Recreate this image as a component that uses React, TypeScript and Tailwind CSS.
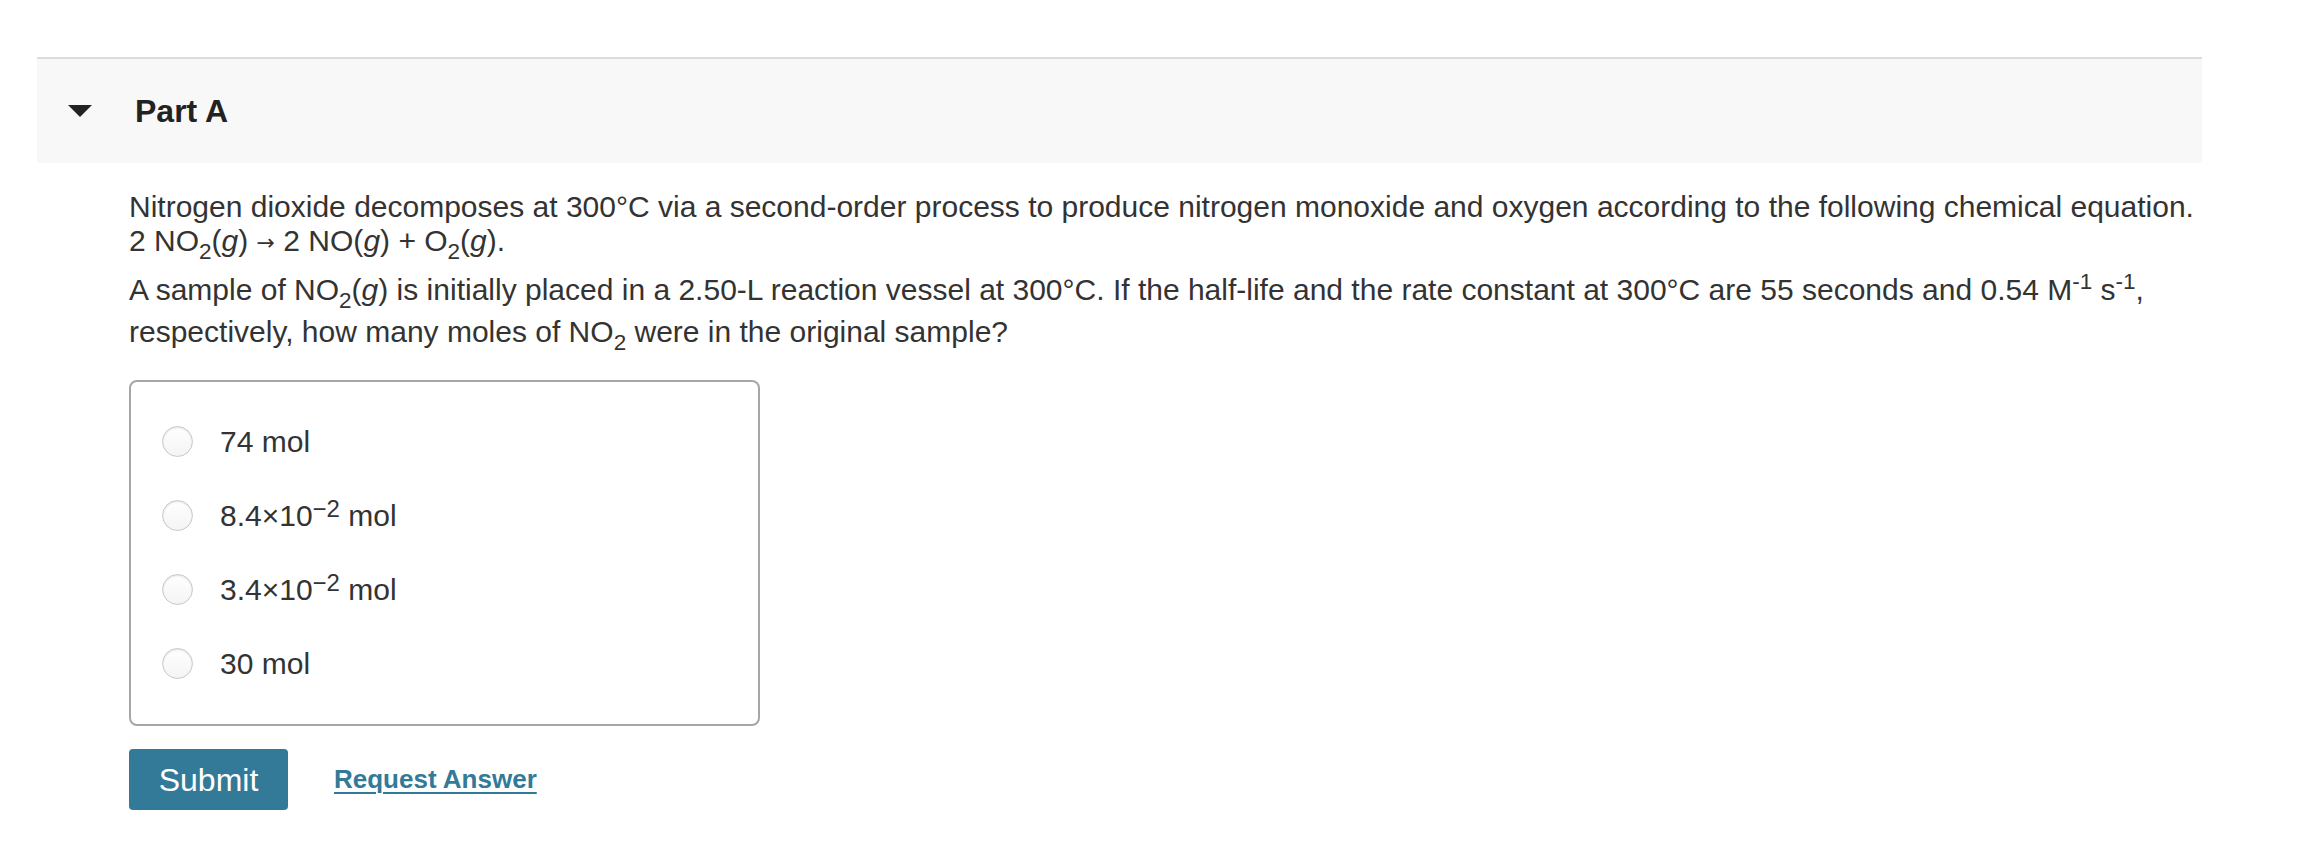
const options = [
  { id: 'a', body: <>74 mol</> },
  { id: 'b', body: <>8.4×10<sup className="-top-[0.35em] text-[80%]">−2</sup> mol</> },
  { id: 'c', body: <>3.4×10<sup className="-top-[0.35em] text-[80%]">−2</sup> mol</> },
  { id: 'd', body: <>30 mol</> },
];

export default function App() {
  return (
    <div className="min-h-screen bg-white pt-[57px] pl-[37px] pr-[102px] font-['Liberation_Sans',Arial,sans-serif]">
      {/* Part header */}
      <div className="flex h-[106px] items-center border-t-2 border-[#dcdcdc] bg-[#f8f8f8]">
        <svg className="ml-[31px] h-[12px] w-[24px]" viewBox="0 0 24 12">
          <path d="M0 0h24L12 12z" fill="#222" />
        </svg>
        <h2 className="ml-[43px] text-[32px] font-bold text-[#222]">Part A</h2>
      </div>

      {/* Question */}
      <div className="pl-[92px] text-[30px] text-[#333]">
        <p className="mt-[27px] whitespace-nowrap leading-[34px]">
          Nitrogen dioxide decomposes at 300°C via a second-order process to produce nitrogen monoxide and oxygen according to the following chemical equation.
          <br />
          2 NO<sub className="-bottom-[0.35em]">2</sub>(<i>g</i>){' '}
          <span className="inline-block h-[34px] align-top font-['DejaVu_Sans',sans-serif] text-[22px] leading-[38px]">→</span> 2 NO(<i>g</i>) + O
          <sub className="-bottom-[0.35em]">2</sub>(<i>g</i>).
        </p>
        <p className="mt-[11px] whitespace-nowrap leading-[42px]">
          A sample of NO<sub className="-bottom-[0.35em]">2</sub>(<i>g</i>) is initially placed in a 2.50-L reaction vessel at 300°C. If the half-life and the rate constant at 300°C are 55 seconds and 0.54 M<sup>-1</sup> s<sup>-1</sup>,
          <br />
          respectively, how many moles of NO<sub className="-bottom-[0.35em]">2</sub> were in the original sample?
        </p>

        {/* Answer choices */}
        <div className="mt-[27px] w-[631px] rounded-[8px] border-2 border-[#a6a6a6] px-[31px] pt-[22px] pb-[24px]">
          {options.map((o) => (
            <label key={o.id} className="flex h-[74px] cursor-pointer items-center">
              <span className="h-[31px] w-[31px] shrink-0 rounded-full border border-[#c9c9c9] bg-gradient-to-b from-white to-[#f4f4f4] shadow-[inset_0_1px_2px_rgba(0,0,0,0.12)]" />
              <span className="ml-[27px]">{o.body}</span>
            </label>
          ))}
        </div>

        {/* Actions */}
        <div className="mt-[23px] flex items-center">
          <button className="h-[61px] w-[159px] rounded-[4px] bg-[#337a99] text-[32px] text-white">
            Submit
          </button>
          <a href="#" className="ml-[46px] text-[26px] font-bold text-[#337a99] underline decoration-2 underline-offset-[4px]">
            Request Answer
          </a>
        </div>
      </div>
    </div>
  );
}
